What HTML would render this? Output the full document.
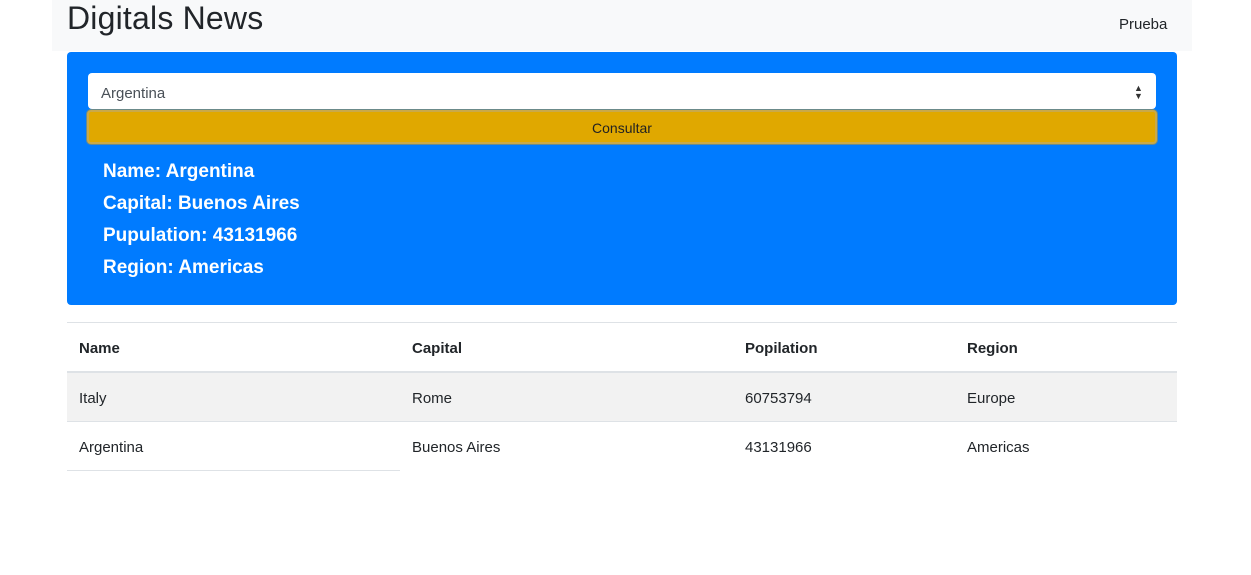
<!DOCTYPE html>
<html><head><style>
body{margin:0;width:1251px;height:575px;background:#fff;font-family:"Liberation Sans",sans-serif;color:#212529;position:relative;overflow:hidden}
.a{position:absolute}
</style></head><body>
<div class="a" style="left:52px;top:0;width:1140px;height:51px;background:#f8f9fa"></div>
<div class="a" style="left:67px;top:-2px;font-size:32px;line-height:40px;font-weight:500;letter-spacing:0.2px">Digitals News</div>
<div class="a" style="left:1119px;top:16px;font-size:15px">Prueba</div>
<div class="a" style="left:67px;top:52px;width:1110px;height:253px;background:#007bff;border-radius:4px"></div>
<div class="a" style="left:88px;top:73px;width:1068px;height:36px;background:#fff;border-radius:4px"></div>
<div class="a" style="left:101px;top:85px;font-size:15px;color:#495057">Argentina</div>
<div class="a" style="left:1134px;top:84px;font-size:9px;line-height:8px;color:#333">▲<br>▼</div>
<div class="a" style="left:87px;top:110px;width:1066px;height:30px;background:#e0a800;border:2px solid #c9a94a;box-shadow:0 0 0 1px #6b8a8a;border-radius:4px"></div>
<div class="a" style="left:88px;top:120px;width:1068px;text-align:center;font-size:14px;color:#222">Consultar</div>
<div class="a" style="left:103px;top:156px;font-size:19px;line-height:32px;font-weight:bold;color:#fff">Name: Argentina<br>Capital: Buenos Aires<br>Pupulation: 43131966<br>Region: Americas</div>
<div class="a" style="left:67px;top:322px;width:1110px;height:1px;background:#dee2e6"></div>
<div class="a" style="left:67px;top:371px;width:1110px;height:2px;background:#dee2e6"></div>
<div class="a" style="left:67px;top:373px;width:1110px;height:48px;background:#f2f2f2"></div>
<div class="a" style="left:67px;top:421px;width:1110px;height:1px;background:#dee2e6"></div>
<div class="a" style="left:67px;top:470px;width:333px;height:1px;background:#dee2e6"></div>
<div class="a" style="top:340px;left:79px;font-size:15px;font-weight:bold">Name</div>
<div class="a" style="top:340px;left:412px;font-size:15px;font-weight:bold">Capital</div>
<div class="a" style="top:340px;left:745px;font-size:15px;font-weight:bold">Popilation</div>
<div class="a" style="top:340px;left:967px;font-size:15px;font-weight:bold">Region</div>
<div class="a" style="top:390px;left:79px;font-size:15px">Italy</div>
<div class="a" style="top:390px;left:412px;font-size:15px">Rome</div>
<div class="a" style="top:390px;left:745px;font-size:15px">60753794</div>
<div class="a" style="top:390px;left:967px;font-size:15px">Europe</div>
<div class="a" style="top:439px;left:79px;font-size:15px">Argentina</div>
<div class="a" style="top:439px;left:412px;font-size:15px">Buenos Aires</div>
<div class="a" style="top:439px;left:745px;font-size:15px">43131966</div>
<div class="a" style="top:439px;left:967px;font-size:15px">Americas</div>
</body></html>
